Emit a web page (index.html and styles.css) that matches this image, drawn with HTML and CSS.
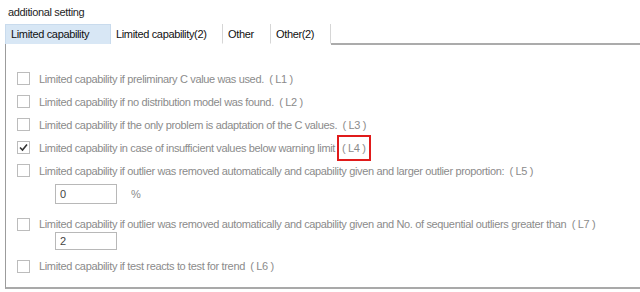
FILE: index.html
```html
<!DOCTYPE html>
<html lang="en">
<head>
  <meta charset="UTF-8">
  <title>additional setting</title>
  <link rel="stylesheet" href="styles.css">
</head>
<body>
  <div class="title">additional setting</div>

  <div class="tabs">
    <div class="tab active">Limited capability</div>
    <div class="tab">Limited capability(2)</div>
    <div class="tab">Other</div>
    <div class="tab">Other(2)</div>
    <div class="tab-fill"></div>
  </div>

  <section class="panel">
    <label class="opt"><span class="box"></span>Limited capability if preliminary C value was used.&nbsp; ( L1 )</label>
    <label class="opt"><span class="box"></span>Limited capability if no distribution model was found.&nbsp; ( L2 )</label>
    <label class="opt"><span class="box"></span>Limited capability if the only problem is adaptation of the C values.&nbsp; ( L3 )</label>
    <label class="opt"><span class="box checked"><svg width="11" height="11" viewBox="0 0 11 11"><polyline points="2,5.5 4.5,8 9,2.5" fill="none" stroke="#333" stroke-width="1.6"/></svg></span>Limited capability in case of insufficient values below warning limit <span class="mark">( L4 )</span></label>
    <label class="opt"><span class="box"></span>Limited capability if outlier was removed automatically and capability given and larger outlier proportion:&nbsp; ( L5 )</label>
    <div class="field-row">
      <div class="field">0</div>
      <span class="unit">%</span>
    </div>
    <label class="opt opt-short"><span class="box"></span>Limited capability if outlier was removed automatically and capability given and No. of sequential outliers greater than&nbsp; ( L7 )</label>
    <div class="field-row tight">
      <div class="field">2</div>
    </div>
    <label class="opt opt-last"><span class="box"></span>Limited capability if test reacts to test for trend&nbsp; ( L6 )</label>
  </section>
</body>
</html>
```

FILE: styles.css
```css
body {
  margin: 0;
  background: #fff;
  font-family: "Liberation Sans", Arial, sans-serif;
  font-size: 11px;
  letter-spacing: -0.35px;
}

.title {
  color: #1e1e1e;
  padding: 5px 0 0 8px;
  height: 14px;
  line-height: 14px;
}

.tabs {
  display: flex;
  margin: 5px 0 0 5px;
  height: 20px;
}

.tab {
  color: #111;
  padding: 0 5px;
  line-height: 21px;
  border-right: 1px solid #d6d6d6;
  border-bottom: 1px solid #fff;
}

.tab.active {
  background: #d8e7f5;
  border: 1px solid #c9dbed;
  border-bottom: none;
  width: 94px;
  line-height: 19px;
}

.tab:nth-child(2) { width: 101px; }
.tab:nth-child(3) { width: 37px; }
.tab:nth-child(4) { width: 49px; }

.tab-fill {
  flex: 1;
  border-bottom: 2px solid #ababab;
  margin-bottom: -1px;
}

.panel {
  margin-left: 5px;
  height: 220px;
  padding-top: 23px;
  border-left: 1px solid #9c9c9c;
  border-bottom: 2px solid #a9a9a9;
  color: #8b8b8b;
}

.opt {
  display: flex;
  align-items: center;
  height: 23px;
  white-space: nowrap;
}

.box {
  width: 11px;
  height: 11px;
  border: 1px solid #bcbcbc;
  margin: 0 9px 0 11px;
  display: flex;
  align-items: center;
  justify-content: center;
}

.mark {
  border: 2px solid #e01b1b;
  padding: 5px 3px;
  margin-left: 2px;
}

.field-row {
  display: flex;
  align-items: center;
  margin: 2px 0 0 49px;
  height: 20px;
}

.field-row.tight {
  margin-top: 0;
  height: 18px;
}

.field {
  width: 62px;
  height: 100%;
  border: 1px solid #b8b8b8;
  box-sizing: border-box;
  padding-left: 4px;
  color: #444;
  display: flex;
  align-items: center;
}

.unit {
  margin-left: 14px;
}

.opt-short {
  margin-top: 12px;
  height: 16px;
}

.opt-last {
  margin-top: 5px;
  height: 22px;
}
```
